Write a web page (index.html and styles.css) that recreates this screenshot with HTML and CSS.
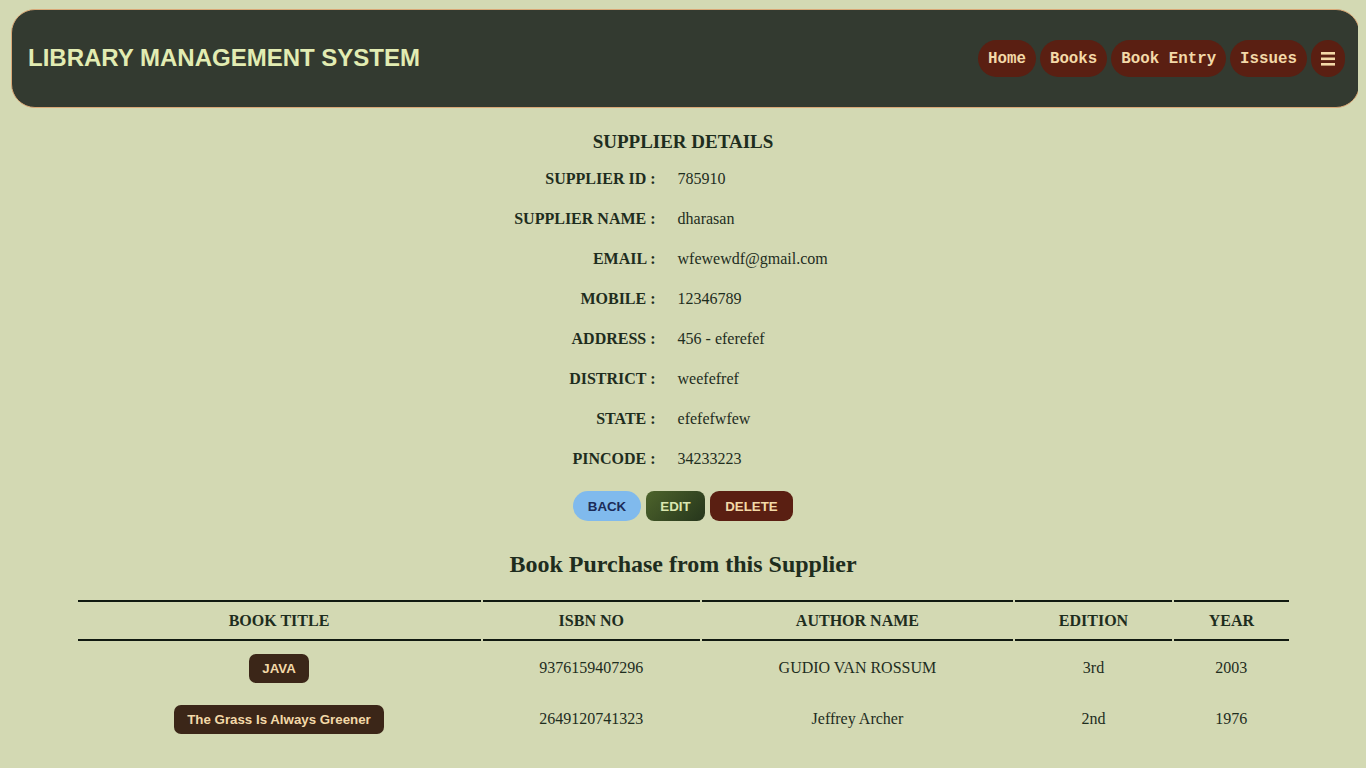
FILE: index.html
```html
<!DOCTYPE html>
<html>
<head>
<meta charset="utf-8">
<title>Supplier Details</title>
<link rel="stylesheet" href="styles.css">
</head>
<body>
<header class="topbar">
  <h1 class="brand">LIBRARY MANAGEMENT SYSTEM</h1>
  <nav class="nav">
    <a class="nav-btn" href="#">Home</a>
    <a class="nav-btn" href="#">Books</a>
    <a class="nav-btn" href="#">Book Entry</a>
    <a class="nav-btn" href="#">Issues</a>
    <a class="nav-btn menu" href="#" aria-label="Menu">
      <svg class="menu-icon" width="14" height="15" viewBox="0 0 14 15">
        <rect x="0" y="1" width="14" height="2.6" fill="#f3d9a8"/>
        <rect x="0" y="6.5" width="14" height="2.6" fill="#f3d9a8"/>
        <rect x="0" y="12" width="14" height="2.6" fill="#f3d9a8"/>
      </svg>
    </a>
  </nav>
</header>

<main class="content">
  <h3 class="section-title">SUPPLIER DETAILS</h3>
  <table class="details">
    <tr><th>SUPPLIER ID :</th><td>785910</td></tr>
    <tr><th>SUPPLIER NAME :</th><td>dharasan</td></tr>
    <tr><th>EMAIL :</th><td>wfewewdf@gmail.com</td></tr>
    <tr><th>MOBILE :</th><td>12346789</td></tr>
    <tr><th>ADDRESS :</th><td>456 - eferefef</td></tr>
    <tr><th>DISTRICT :</th><td>weefefref</td></tr>
    <tr><th>STATE :</th><td>efefefwfew</td></tr>
    <tr><th>PINCODE :</th><td>34233223</td></tr>
  </table>

  <div class="actions">
    <a class="btn btn-back" href="#">BACK</a>
    <a class="btn btn-edit" href="#">EDIT</a>
    <a class="btn btn-delete" href="#">DELETE</a>
  </div>

  <h2 class="purchase-title">Book Purchase from this Supplier</h2>

  <table class="books">
    <thead>
      <tr>
        <th class="c-title">BOOK TITLE</th>
        <th class="c-isbn">ISBN NO</th>
        <th class="c-author">AUTHOR NAME</th>
        <th class="c-edition">EDITION</th>
        <th class="c-year">YEAR</th>
      </tr>
    </thead>
    <tbody>
      <tr class="row-first">
        <td><span class="badge">JAVA</span></td>
        <td>9376159407296</td>
        <td>GUDIO VAN ROSSUM</td>
        <td>3rd</td>
        <td>2003</td>
      </tr>
      <tr class="row-second">
        <td><span class="badge">The Grass Is Always Greener</span></td>
        <td>2649120741323</td>
        <td>Jeffrey Archer</td>
        <td>2nd</td>
        <td>1976</td>
      </tr>
    </tbody>
  </table>
</main>
</body>
</html>
```

FILE: styles.css
```css
html, body {
  background: #d3d9b3;
}
body {
  margin: 8px;
  font-family: "Liberation Serif", "Times New Roman", serif;
  color: #1e2d1e;
}

.topbar {
  display: flex;
  align-items: center;
  justify-content: space-between;
  box-sizing: border-box;
  height: 99px;
  margin: 1px -2px 0 3px;
  padding: 0 14px 0 16px;
  background: #333a30;
  border: 1px solid #d9a877;
  border-radius: 24px;
}
.brand {
  margin: 0 0 2px;
  font-family: "Liberation Sans", Arial, sans-serif;
  font-size: 24px;
  font-weight: bold;
  color: #e2ecb2;
}
.nav {
  display: flex;
  gap: 4px;
  align-items: center;
}
.nav-btn {
  display: flex;
  align-items: center;
  height: 37px;
  padding: 0 10px;
  border-radius: 19px;
  background: #5a1f12;
  color: #f3d9a8;
  font-family: "Liberation Mono", "Courier New", monospace;
  font-size: 15.8px;
  font-weight: bold;
  text-decoration: none;
}
.nav-btn.menu {
  width: 34px;
  box-sizing: border-box;
  justify-content: center;
  padding: 0;
  margin-left: 0;
}
.menu-icon {
  display: block;
}

.content {
  display: flex;
  flex-direction: column;
  align-items: center;
}
.section-title {
  margin: 23px 0 5px;
  font-size: 19px;
  font-weight: bold;
}
.details {
  border-collapse: separate;
  border-spacing: 2px;
  font-size: 16px;
  margin: 0 24px 0 0;
}
.details th {
  text-align: right;
  font-weight: bold;
  padding: 9px 10px 9px 10px;
  height: 20px;
}
.details td {
  text-align: left;
  padding: 9px 10px 9px 10px;
}

.actions {
  display: flex;
  gap: 5px;
  margin-top: 11px;
}
.btn {
  display: flex;
  align-items: center;
  justify-content: center;
  height: 30px;
  box-sizing: border-box;
  padding: 0;
  font-family: "Liberation Sans", Arial, sans-serif;
  font-size: 13.3px;
  font-weight: bold;
  text-decoration: none;
}
.btn-back {
  background: #80baed;
  color: #1b2b58;
  border-radius: 15px;
  width: 68px;
}
.btn-edit {
  background: linear-gradient(135deg, #4d632b, #26361c);
  color: #dbe7b0;
  border-radius: 8px;
  width: 59px;
}
.btn-delete {
  background: #5a1f12;
  color: #f3d9a8;
  border-radius: 9px;
  width: 83px;
}

.purchase-title {
  margin: 30px 0 22px;
  font-size: 24px;
  font-weight: bold;
}

.books {
  width: 1215px;
  border-collapse: separate;
  border-spacing: 2px 0;
  font-size: 16px;
}
.books th {
  font-weight: bold;
  height: 37px;
  border-top: 2px solid #111a11;
  border-bottom: 2px solid #111a11;
  padding: 0;
}
.books td {
  text-align: center;
  padding: 0;
}
.books .row-first td {
  height: 54px;
}
.books .row-second td {
  height: 48px;
}
.c-title { width: 402px; }
.c-isbn { width: 217px; }
.c-author { width: 310px; }
.c-edition { width: 157px; }
.c-year { width: 114px; }

.badge {
  display: inline-block;
  padding: 7px 13px;
  border-radius: 7px;
  background: #3b2618;
  color: #f3d9a8;
  font-family: "Liberation Sans", Arial, sans-serif;
  font-size: 13.3px;
  font-weight: bold;
}
```
